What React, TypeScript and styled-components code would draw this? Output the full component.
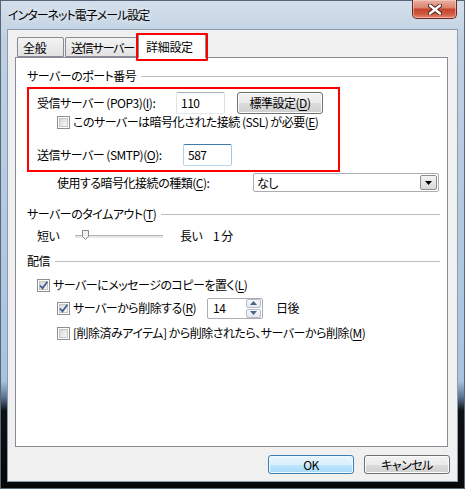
import React from "react";
import styled, { createGlobalStyle } from "styled-components";

const GlobalStyle = createGlobalStyle`
  html, body {
    margin: 0;
    padding: 0;
    background: #000;
  }
  body {
    font-family: "Noto Sans CJK JP", "Noto Sans", sans-serif;
    font-size: 12px;
    font-feature-settings: "palt";
    letter-spacing: -0.5px;
    color: #000;
  }
  #root {
    width: 465px;
    height: 489px;
    overflow: hidden;
  }
`;

const Window = styled.div`
  width: 465px;
  height: 489px;
  box-sizing: border-box;
  display: flex;
  flex-direction: column;
  border: 1px solid #55657a;
  background: linear-gradient(
    180deg,
    #d3dfeb 0px,
    #bfd0e2 40px,
    #a9c3df 380px,
    #5d7592 396px,
    #0d1015 410px,
    #070707 100%
  );
`;

const TitleBar = styled.div`
  height: 28px;
  display: flex;
  align-items: flex-start;
  padding-left: 7px;
`;

const Title = styled.div`
  margin-top: 6px;
  line-height: 16px;
  font-size: 12px;
  letter-spacing: -1px;
  text-shadow: 0 0 6px rgba(255, 255, 255, 0.9);
`;

const CloseButton = styled.div`
  margin-left: auto;
  margin-right: 7px;
  width: 45px;
  height: 19px;
  box-sizing: border-box;
  margin-top: -1px;
  border: 1px solid #6e2a22;
  border-top: none;
  border-radius: 0 0 5px 5px;
  background: linear-gradient(
    180deg,
    #eab0a2 0%,
    #dc8570 42%,
    #c6452e 52%,
    #cf5a40 78%,
    #e58b72 100%
  );
  box-shadow: inset 0 0 0 1px rgba(255, 220, 210, 0.5);
  display: flex;
  align-items: center;
  justify-content: center;
`;

const Content = styled.div`
  flex: 1;
  margin: 0 6px 6px 6px;
  box-sizing: border-box;
  border: 1px solid #8a9cb0;
  background: #f0f0f0;
  display: flex;
  flex-direction: column;
  padding: 3px 9px 0 7px;
`;

const TabStrip = styled.div`
  height: 24px;
  display: flex;
  align-items: flex-end;
  padding-left: 2px;
`;

const Tab = styled.div<{ $active?: boolean; $w: number; $tight?: boolean }>`
  position: relative;
  box-sizing: border-box;
  width: ${(p) => p.$w}px;
  height: ${(p) => (p.$active ? 24 : 20)}px;
  margin-bottom: ${(p) => (p.$active ? -1 : 0)}px;
  margin-right: ${(p) => (p.$active ? 0 : 1)}px;
  z-index: ${(p) => (p.$active ? 2 : 0)};
  border: 1px solid #898c95;
  border-bottom: ${(p) => (p.$active ? "none" : "1px solid #898c95")};
  border-radius: 2px 2px 0 0;
  padding: ${(p) => (p.$active ? "4px 0 0 7px" : "2px 0 0 5px")};
  line-height: 16px;
  letter-spacing: ${(p) => (p.$tight ? "-1.2px" : "-0.3px")};
  white-space: nowrap;
  background: ${(p) =>
    p.$active ? "#fff" : "linear-gradient(180deg, #f3f3f3 0%, #ebebeb 50%, #e2e2e2 100%)"};
`;

const TabMark = styled.div`
  position: absolute;
  left: -3px;
  right: -3px;
  top: -2px;
  bottom: -3px;
  border: 2px solid #f00;
  border-radius: 1px;
  pointer-events: none;
`;

const Panel = styled.div`
  width: 433px;
  height: 390px;
  box-sizing: border-box;
  border: 1px solid #898c95;
  background: #fff;
  padding: 0 7px 0 11px;
  display: flex;
  flex-direction: column;
`;

const Heading = styled.div<{ $mt: number }>`
  margin-top: ${(p) => p.$mt}px;
  height: 16px;
  line-height: 16px;
  display: flex;
  align-items: center;
  white-space: nowrap;
`;

const HeadingLine = styled.div`
  flex: 1;
  height: 1px;
  margin-left: 5px;
  background: #bdbdbd;
`;

const RedBox = styled.div`
  margin-top: 3px;
  width: 313px;
  box-sizing: border-box;
  border: 2px solid #f00;
  padding: 3px 0 4px 8px;
  display: flex;
  flex-direction: column;
`;

const Row = styled.div<{ $h: number; $mt?: number; $pl?: number }>`
  height: ${(p) => p.$h}px;
  margin-top: ${(p) => p.$mt ?? 0}px;
  padding-left: ${(p) => p.$pl ?? 0}px;
  display: flex;
  align-items: center;
  line-height: 16px;
  white-space: nowrap;
`;

const Label = styled.span<{ $w?: number }>`
  display: inline-block;
  width: ${(p) => (p.$w ? `${p.$w}px` : "auto")};
  flex-shrink: 0;
`;

const U = styled.span`
  text-decoration: underline;
  text-underline-offset: 2px;
`;

const TextBox = styled.div<{ $w: number; $focus?: boolean }>`
  width: ${(p) => p.$w}px;
  height: 22px;
  box-sizing: border-box;
  padding-left: 4px;
  display: flex;
  align-items: center;
  background: #fff;
  border: 1px solid;
  border-color: ${(p) =>
    p.$focus
      ? "#3d7bad #a4c9e3 #b7d9ed #b5cfe7"
      : "#abadb3 #dbdfe6 #e3e9ef #e2e3ea"};
  border-radius: 2px;
`;

const Button = styled.div<{ $w: number; $h: number; $default?: boolean }>`
  width: ${(p) => p.$w}px;
  height: ${(p) => p.$h}px;
  box-sizing: border-box;
  display: flex;
  align-items: center;
  justify-content: center;
  line-height: 16px;
  border: 1px solid ${(p) => (p.$default ? "#3c7fb1" : "#707070")};
  border-radius: 3px;
  box-shadow: inset 0 0 0 1px ${(p) => (p.$default ? "#f0f9ff" : "#fcfcfc")};
  background: ${(p) =>
    p.$default
      ? "linear-gradient(180deg, #eaf6fd 0%, #d9f0fc 50%, #bee6fd 50%, #a7d9f5 100%)"
      : "linear-gradient(180deg, #f2f2f2 0%, #ebebeb 50%, #dddddd 50%, #cfcfcf 100%)"};
`;

const BoxWrap = styled.span`
  width: 13px;
  height: 13px;
  flex-shrink: 0;
  box-sizing: border-box;
  border: 1px solid #8e8f8f;
  background: #fff;
  padding: 1px;
  margin-right: 3px;
`;

const BoxInner = styled.span`
  display: block;
  width: 9px;
  height: 9px;
  box-sizing: border-box;
  border: 1px solid #c5c5c5;
  background: linear-gradient(135deg, #d8d8d8 0%, #ececec 60%, #f8f8f8 100%);
  position: relative;
`;

const CheckSvg = styled.svg`
  position: absolute;
  left: -2px;
  top: -2px;
`;

const Check = ({ on }: { on?: boolean }) => (
  <BoxWrap>
    <BoxInner>
      {on && (
        <CheckSvg width="11" height="11" viewBox="0 0 11 11">
          <path d="M2 5.5 L4.5 8.3 L9.3 1.8" fill="none" stroke="#3d5a8e" strokeWidth="1.7" />
        </CheckSvg>
      )}
    </BoxInner>
  </BoxWrap>
);

const SelectBox = styled.div`
  width: 186px;
  height: 19px;
  box-sizing: border-box;
  border: 1px solid #abadb3;
  border-radius: 2px;
  background: #fff;
  display: flex;
  align-items: center;
  justify-content: space-between;
  padding: 0 1px 0 3px;
`;

const DropButton = styled.div`
  width: 17px;
  height: 15px;
  box-sizing: border-box;
  border: 1px solid #8e8e8e;
  border-radius: 2px;
  background: linear-gradient(180deg, #f4f4f4 0%, #e6e6e6 50%, #d6d6d6 100%);
  display: flex;
  align-items: center;
  justify-content: center;
`;

const Slider = styled.div`
  position: relative;
  width: 88px;
  height: 18px;
  display: flex;
  align-items: center;
`;

const Track = styled.div`
  width: 100%;
  height: 3px;
  box-sizing: border-box;
  border-top: 1px solid #b3b3b3;
  border-bottom: 1px solid #e6e6e6;
  background: #e8eaea;
`;

const Thumb = styled.svg`
  position: absolute;
  left: 7px;
  top: 3px;
`;

const Spinner = styled.div`
  width: 56px;
  height: 21px;
  box-sizing: border-box;
  border: 1px solid #abadb3;
  border-radius: 2px;
  background: #fff;
  display: flex;
  align-items: center;
  padding: 0 1px 0 5px;
`;

const SpinCol = styled.div`
  margin-left: auto;
  width: 15px;
  height: 19px;
  display: flex;
  flex-direction: column;
  gap: 1px;
`;

const SpinBtn = styled.div`
  flex: 1;
  box-sizing: border-box;
  border: 1px solid #b6bdc8;
  border-radius: 2px;
  background: linear-gradient(180deg, #f6f8fa 0%, #e4e9ef 100%);
  display: flex;
  align-items: center;
  justify-content: center;
`;

const ButtonRow = styled.div`
  margin-top: 8px;
  margin-right: -2px;
  display: flex;
  justify-content: flex-end;
  gap: 10px;
`;

const Tri = ({ up, color }: { up?: boolean; color: string }) => (
  <svg width="7" height="4" viewBox="0 0 7 4">
    <path d={up ? "M0 4 L3.5 0 L7 4 Z" : "M0 0 L7 0 L3.5 4 Z"} fill={color} />
  </svg>
);

export default function App() {
  return (
    <>
      <GlobalStyle />
      <Window>
        <TitleBar>
          <Title>インターネット電子メール設定</Title>
          <CloseButton>
            <svg width="14" height="11" viewBox="0 0 14 11">
              <path d="M2 1.5 L12 9.5 M12 1.5 L2 9.5" stroke="#4a1c16" strokeWidth="4.2" strokeLinecap="round" />
              <path d="M2 1.5 L12 9.5 M12 1.5 L2 9.5" stroke="#fff" strokeWidth="2.4" strokeLinecap="round" />
            </svg>
          </CloseButton>
        </TitleBar>
        <Content>
          <TabStrip>
            <Tab $w={47}>全般</Tab>
            <Tab $w={72} $tight>
              送信サーバー
            </Tab>
            <Tab $w={68} $active>
              詳細設定
              <TabMark />
            </Tab>
          </TabStrip>
          <Panel>
            <Heading $mt={10}>
              サーバーのポート番号
              <HeadingLine />
            </Heading>
            <RedBox>
              <Row $h={22}>
                <Label $w={139}>
                  受信サーバー (POP3)(<U>I</U>):
                </Label>
                <TextBox $w={49}>110</TextBox>
                <Button $w={86} $h={22} style={{ marginLeft: 12 }}>
                  標準設定(<U>D</U>)
                </Button>
              </Row>
              <Row $h={16} $pl={20}>
                <Check />
                このサーバーは暗号化された接続 (SSL) が必要(<U>E</U>)
              </Row>
              <Row $h={22} $mt={14}>
                <Label $w={146}>
                  送信サーバー (SMTP)(<U>O</U>):
                </Label>
                <TextBox $w={49} $focus>
                  587
                </TextBox>
              </Row>
            </RedBox>
            <Row $h={19} $mt={1} $pl={30}>
              <Label $w={196}>
                使用する暗号化接続の種類(<U>C</U>):
              </Label>
              <SelectBox>
                なし
                <DropButton>
                  <Tri color="#000" />
                </DropButton>
              </SelectBox>
            </Row>
            <Heading $mt={14}>
              サーバーのタイムアウト(<U>T</U>)
              <HeadingLine />
            </Heading>
            <Row $h={18} $mt={5} $pl={10}>
              <Label $w={38}>短い</Label>
              <Slider>
                <Track />
                <Thumb width="7" height="10" viewBox="0 0 7 10">
                  <path d="M0.5 0.5 H6.5 V6.5 L3.5 9.5 L0.5 6.5 Z" fill="#eef0f2" stroke="#8a8a8a" />
                </Thumb>
              </Slider>
              <Label $w={33} style={{ marginLeft: 17 }}>
                長い
              </Label>
              1 分
            </Row>
            <Heading $mt={8}>
              配信
              <HeadingLine />
            </Heading>
            <Row $h={16} $mt={8} $pl={10}>
              <Check on />
              サーバーにメッセージのコピーを置く(<U>L</U>)
            </Row>
            <Row $h={20} $mt={5} $pl={30}>
              <Label $w={150}>
                <Row $h={20}>
                  <Check on />
                  サーバーから削除する(<U>R</U>)
                </Row>
              </Label>
              <Spinner>
                14
                <SpinCol>
                  <SpinBtn>
                    <Tri up color="#4d6185" />
                  </SpinBtn>
                  <SpinBtn>
                    <Tri color="#4d6185" />
                  </SpinBtn>
                </SpinCol>
              </Spinner>
              <Label style={{ marginLeft: 13 }}>日後</Label>
            </Row>
            <Row $h={16} $mt={7} $pl={30}>
              <Check />
              [削除済みアイテム] から削除されたら、サーバーから削除(<U>M</U>)
            </Row>
          </Panel>
          <ButtonRow>
            <Button $w={86} $h={19} $default>
              OK
            </Button>
            <Button $w={86} $h={19}>
              キャンセル
            </Button>
          </ButtonRow>
        </Content>
      </Window>
    </>
  );
}
